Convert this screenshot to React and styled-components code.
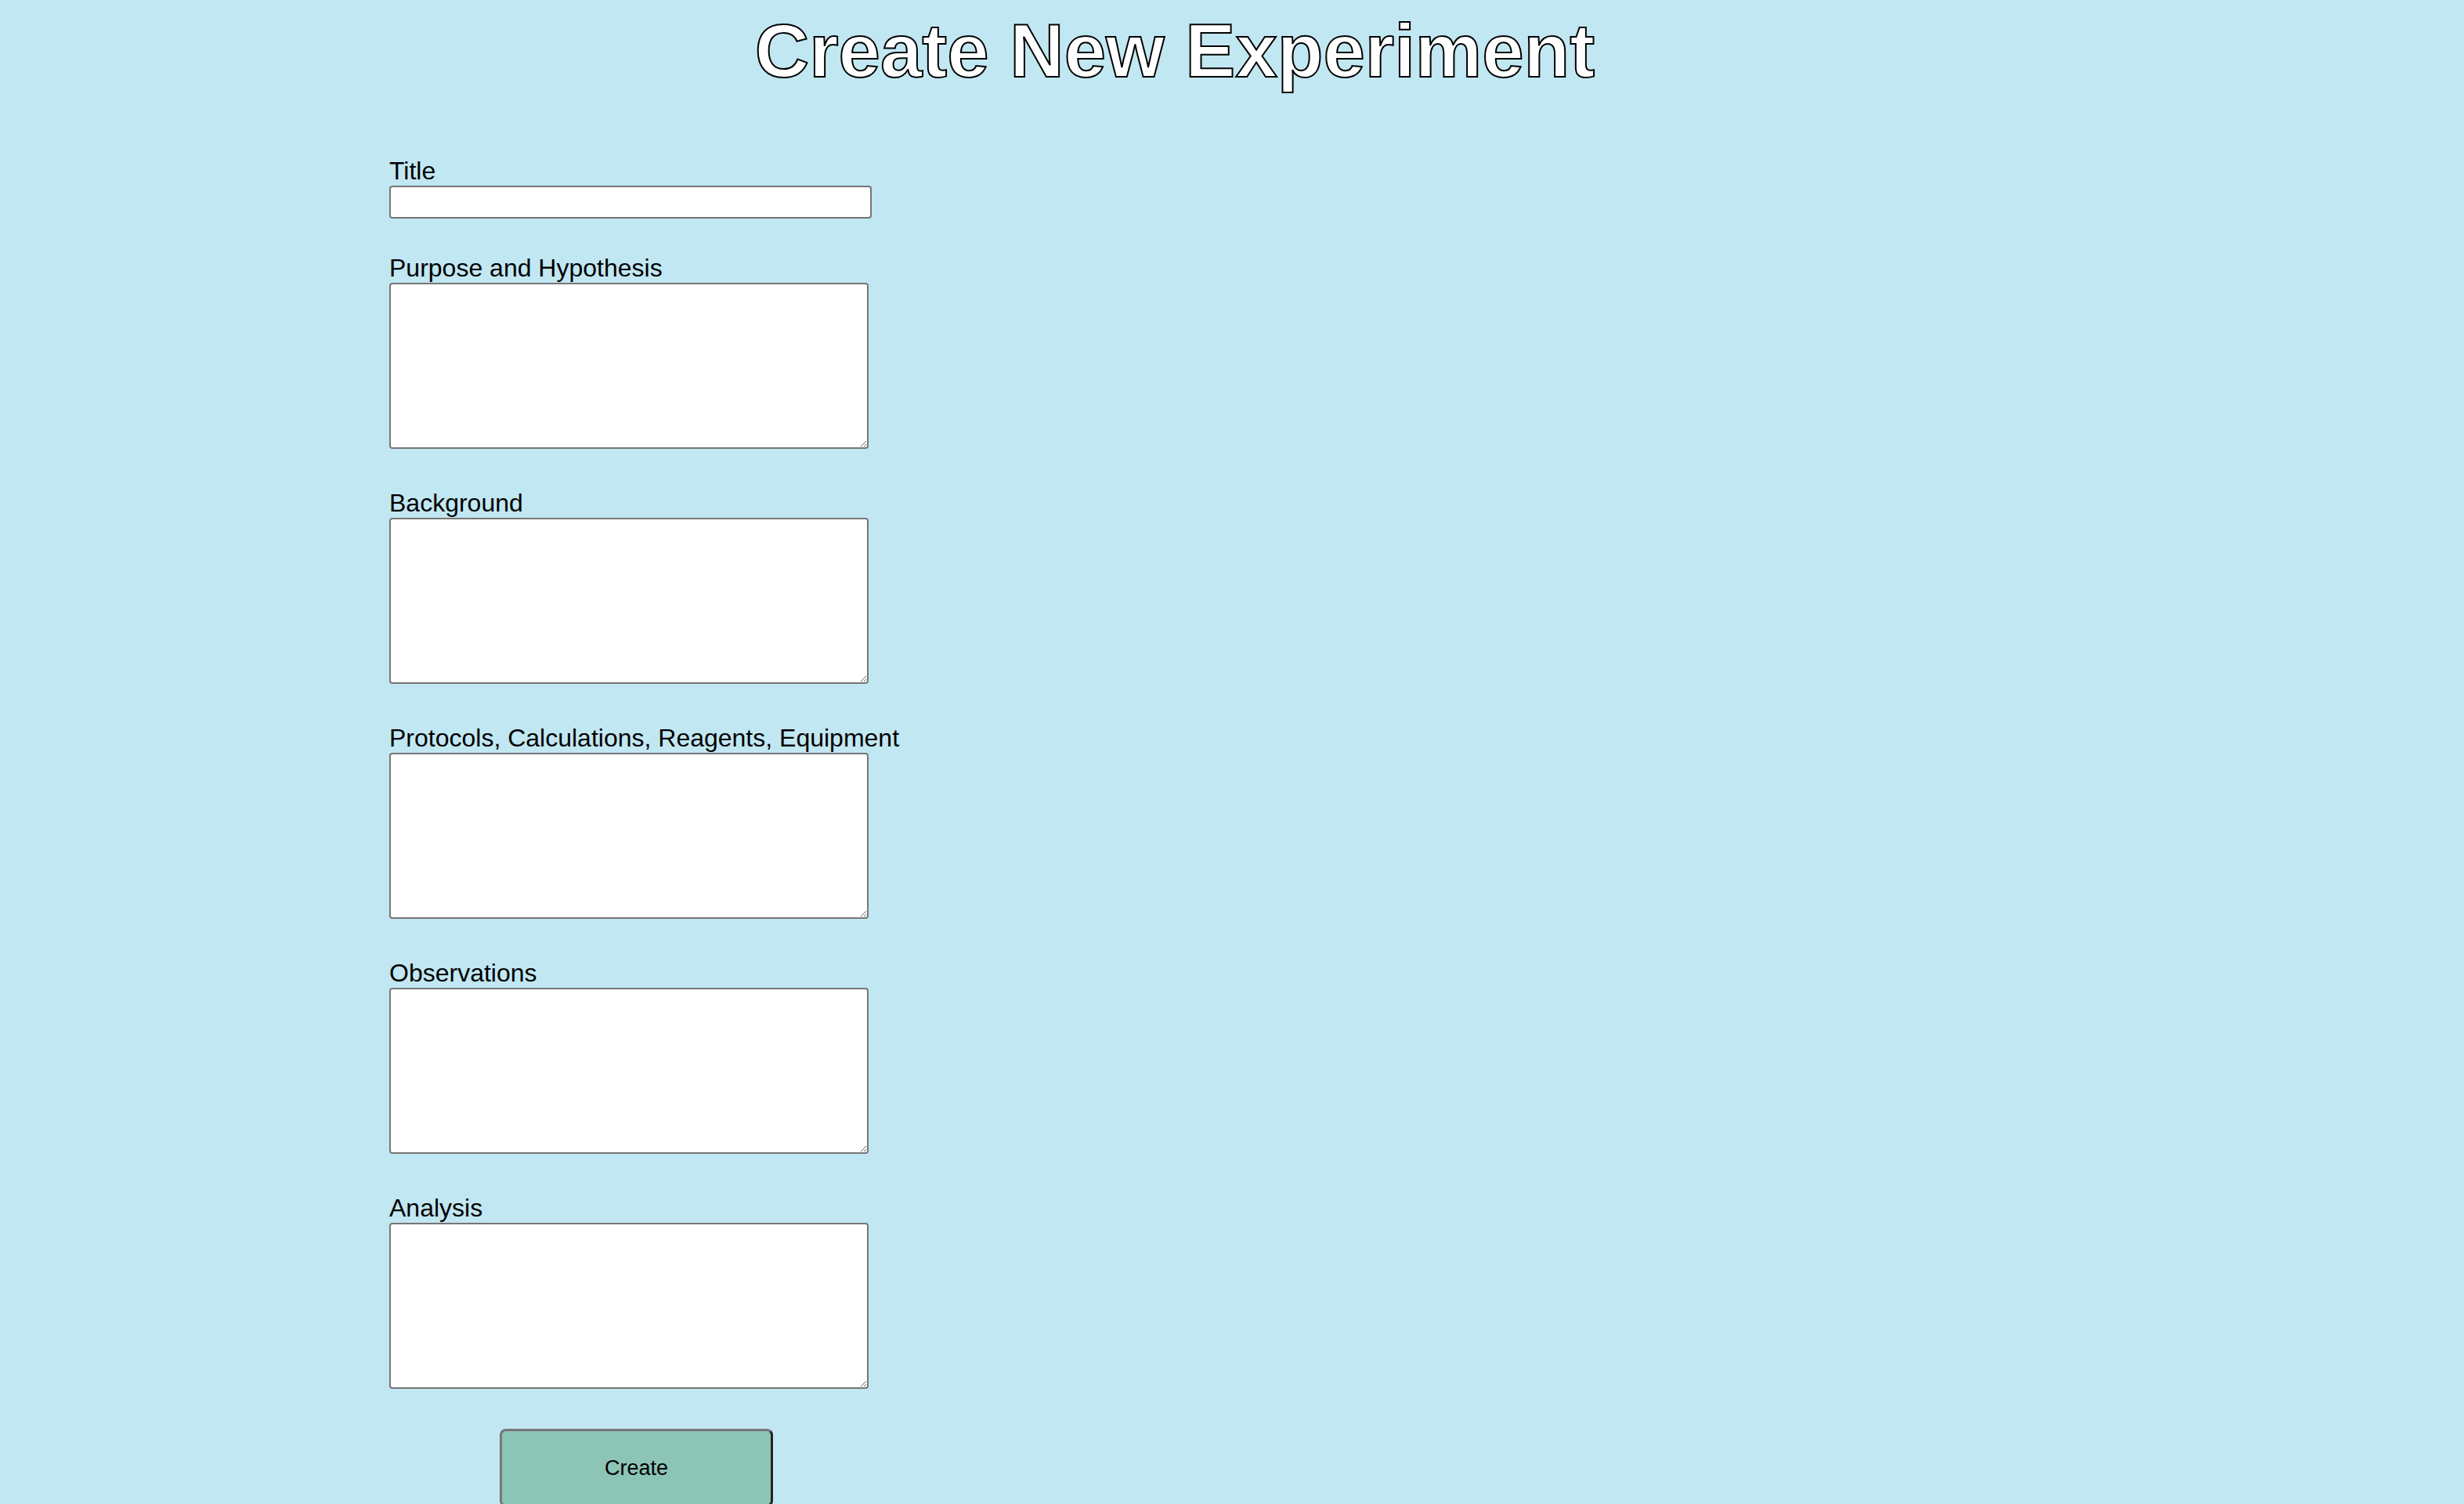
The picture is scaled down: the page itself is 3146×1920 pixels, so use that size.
import styled, { createGlobalStyle } from "styled-components";

const GlobalStyle = createGlobalStyle`
    * {
        box-sizing: border-box;
    }
    body {
        margin: 0;
        background-color: #c1e7f2;
        font-family: "Liberation Sans", Arial, Helvetica, sans-serif;
    }
`;

const Page = styled.div`
    padding-top: 10px;
`;

const Heading = styled.h1`
    margin: 0;
    padding-right: 146px;
    text-align: center;
    font-size: 96px;
    font-weight: 700;
    line-height: 110px;
    color: #fff;
    -webkit-text-stroke: 2px #000;
`;

const Form = styled.form`
    display: flex;
    flex-direction: column;
    align-items: flex-start;
    padding-left: 497px;
    margin-top: 80px;
`;

const Field = styled.div`
    display: flex;
    flex-direction: column;
    align-items: flex-start;
    margin-bottom: ${props => props.gap || 51}px;
`;

const Label = styled.label`
    font-size: 32px;
    line-height: 37px;
    color: #000;
`;

const TextInput = styled.input`
    width: 616px;
    height: 42px;
    padding: 2px 4px;
    border: 2px solid #767676;
    border-radius: 4px;
    background: #fff;
    font-size: 27px;
    font-family: inherit;
`;

const TextArea = styled.textarea`
    width: 612px;
    height: 212px;
    padding: 4px;
    border: 2px solid #767676;
    border-radius: 4px;
    background: #fff;
    font-size: 27px;
    font-family: inherit;
`;

const CreateButton = styled.button`
    margin-left: 141px;
    width: 349px;
    height: 100px;
    background-color: #8cc4b6;
    border: 3px solid;
    border-color: #767676 #222 #222 #767676;
    border-radius: 8px;
    font-family: "Liberation Sans", Arial, sans-serif;
    font-size: 27px;
    color: #000;
`;

const sections = [
    "Purpose and Hypothesis",
    "Background",
    "Protocols, Calculations, Reagents, Equipment",
    "Observations",
    "Analysis",
];

function App() {
    return (
        <>
            <GlobalStyle />
            <Page>
                <Heading>Create New Experiment</Heading>
                <Form onSubmit={e => e.preventDefault()}>
                    <Field gap={45}>
                        <Label htmlFor="title">Title</Label>
                        <TextInput id="title" type="text" />
                    </Field>
                    {sections.map((name, i) => (
                        <Field key={name}>
                            <Label htmlFor={"f" + i}>{name}</Label>
                            <TextArea id={"f" + i} />
                        </Field>
                    ))}
                    <CreateButton type="submit">Create</CreateButton>
                </Form>
            </Page>
        </>
    );
}

export default App;
